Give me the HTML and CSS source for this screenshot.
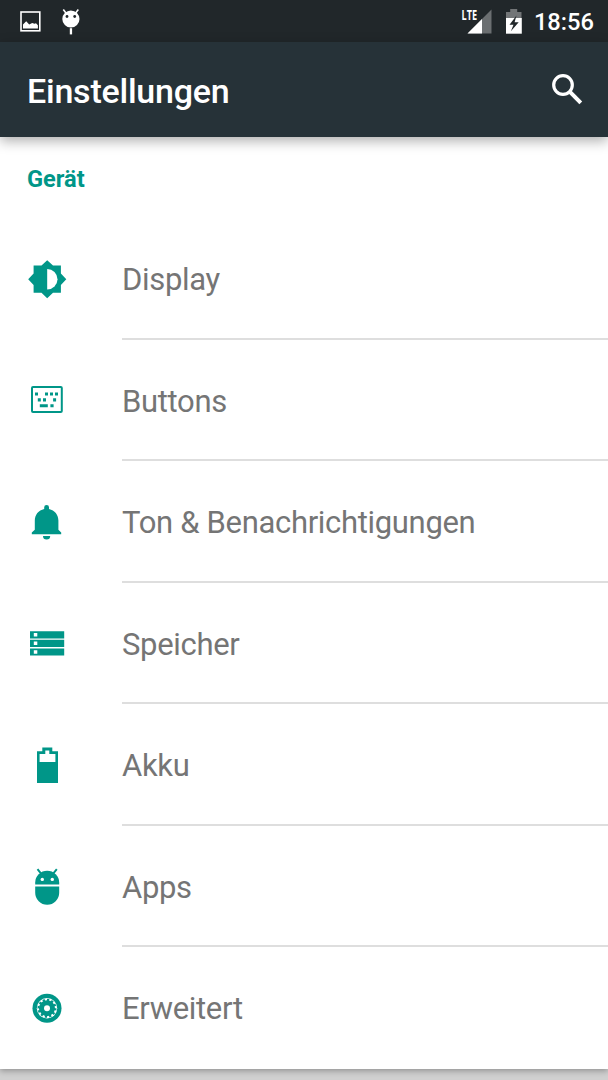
FILE: index.html
```
<!DOCTYPE html>
<html lang="de">
<head>
  <title>Einstellungen</title>
  <meta charset="utf-8">
  <link rel="stylesheet" href="styles.css">
</head>
<body>

  <!-- Status bar -->
  <div class="status-bar">
    <svg class="status-picture" width="22" height="22" viewBox="0 0 22 22">
      <rect x="1" y="1" width="18.8" height="18.8" fill="none" stroke="#fff" stroke-width="1.6"/>
      <path d="M3 17.5V13.5l3.2-3.2 3 3.2 3-1.5 2.3.8 1.500-.5 1.900 2v3.200z" fill="#fff"/>
    </svg>
    <svg class="status-droid" width="20" height="28" viewBox="0 0 20 28">
      <path d="M2.3 1.5l3 4M17.3 1.5l-3 4" stroke="#fff" stroke-width="1.6"/>
      <circle cx="9.9" cy="11" r="8.6" fill="#fff"/>
      <circle cx="6" cy="8.5" r="1.4" fill="#21272a"/>
      <circle cx="13.7" cy="8.5" r="1.4" fill="#21272a"/>
      <rect x="8.8" y="20.2" width="2.3" height="6.2" fill="#fff"/>
    </svg>
    <svg class="status-signal" width="32" height="28" viewBox="0 0 32 28">
      <path d="M30.5 1.5v24H6.5z" fill="#6b6f71"/>
      <path d="M21 11V25.5H6.5z" fill="#fff"/>
      <text x="0.5" y="12" class="lte" textLength="15.5" lengthAdjust="spacingAndGlyphs">LTE</text>
    </svg>
    <svg class="status-battery" width="18" height="28" viewBox="0 0 18 28">
      <path d="M5.200 1h7v3h4.300v6.500H1V4h4.200z" fill="#727577"/>
      <path d="M1 10h15.800v15.700H1z" fill="#fff"/>
      <path d="M11.500 7.500l-7 9.200h4l-2.600 6.500 7.800-9H9.600z" fill="#21272a"/>
    </svg>
    <span class="clock">18:56</span>
  </div>

  <div class="toolbar">
    <h1>Einstellungen</h1>
    <svg width="32" height="32" viewBox="0 0 32 32">
      <circle cx="12" cy="11" r="9.3" fill="none" stroke="#fff" stroke-width="3.2"/>
      <path d="M18.7 17.7L29.8 28.8" stroke="#fff" stroke-width="4"/>
    </svg>
  </div>

  <div class="card">
    <h2>Gerät</h2>
    <ul class="settings">
      <li>
        <svg class="icon" viewBox="0 0 40 40">
          <path d="M20.2 1.3L26 6.6h7.9v7.9l5.4 5.7-5.4 5.7v7.9H26l-5.8 5.4-5.7-5.4H6.6v-7.9l-5.4-5.7 5.4-5.7V6.6h7.9z"/>
          <path class="cut" d="M20.2 9.9a10.3 10.3 0 0 1 0 20.6z"/>
        </svg>
        <span>Display</span>
      </li>
      <li>
        <svg class="icon" viewBox="0 0 40 40">
          <rect x="5" y="6.9" width="29.8" height="25.2" rx="1" class="outline"/>
          <path d="M8 12.6h3v3H8zM18 12.6h3v3h-3zM23 12.6h3v3h-3zM28 12.6h3v3h-3z"/>
          <path d="M10.8 18.3h3v3.2h-3zM16 18.3h3v3.2h-3zM26.1 18.3h3v3.2h-3z"/>
          <path d="M12.8 24.3h8v3h-8zM23.4 24.3h3.2v3h-3.2z"/>
        </svg>
        <span>Buttons</span>
      </li>
      <li>
        <svg class="icon" viewBox="0 0 40 40">
          <path d="M17.2 7V5.3a2.4 2.4 0 0 1 4.8 0V7c5.7 1.3 9.4 5.8 9.4 11.5v9.3l2.8 2.8v1.6H4.8v-1.6l3-2.8v-9.3C7.8 12.8 11.5 8.3 17.2 7z"/>
          <path d="M16 34h7.2a3.6 3.5 0 0 1-7.2 0z"/>
        </svg>
        <span>Ton &amp; Benachrichtigungen</span>
      </li>
      <li>
        <svg class="icon" viewBox="0 0 40 40">
          <path d="M3 8.2h34.2v7.2H3zM3 16.8h34.2v7.2H3zM3 25.4h34.2v7.2H3z"/>
          <path class="cut" d="M6.8 10h3.5v3.5H6.8zM6.8 18.6h3.5v3.5H6.8zM6.8 27.2h3.5v3.5H6.8z"/>
        </svg>
        <span>Speicher</span>
      </li>
      <li>
        <svg class="icon" viewBox="0 0 40 40">
          <path d="M15.3 2.5h10v3.8H31V37.9H10V6.3h5.3z"/>
          <path class="cut" d="M18.3 5.5h4v3.6h6.1v7.8H12.6V9.1h5.7z"/>
        </svg>
        <span>Akku</span>
      </li>
      <li>
        <svg class="icon" viewBox="0 0 40 40">
          <path class="outline" d="M10.5 3.2l3.8 4.6M29.8 3.2L26 7.8"/>
          <path d="M8.2 18.5v-2a12 11.7 0 0 1 24 0v2z"/>
          <path d="M8.2 20.6h24v6.2a12 12 0 0 1-24 0z"/>
          <circle class="cut" cx="15.3" cy="13.4" r="1.7"/>
          <circle class="cut" cx="25.3" cy="13.4" r="1.7"/>
        </svg>
        <span>Apps</span>
      </li>
      <li>
        <svg class="icon" viewBox="0 0 40 40">
          <circle cx="20" cy="20.2" r="14.5"/>
          <circle class="cut" cx="20" cy="20.2" r="10.2"/>
          <circle cx="20" cy="20.2" r="8"/>
          <circle class="teeth" cx="20" cy="20.2" r="8.3" pathLength="24"/>
          <circle class="cut" cx="20" cy="20.2" r="3"/>
        </svg>
        <span>Erweitert</span>
      </li>
    </ul>
  </div>

</body>
</html>
```

FILE: styles.css
```
/* General Page Styling */
* {
  box-sizing: border-box;
}

body {
  font-family: Roboto, sans-serif;
  background-color: #d0d0d0;
  margin: 0;
  height: 1080px;
  overflow: hidden;
}

/* Status Bar */
.status-bar {
  display: flex;
  align-items: center;
  height: 42px;
  padding: 2px 14px 0 20px;
  background-color: #21272a;
}

.status-droid {
  margin-left: 19px;
}

.status-signal {
  margin-left: auto;
  overflow: visible;
}

.status-battery {
  margin-left: 12px;
}

.lte {
  font-family: "Open Sans", sans-serif;
  font-size: 13.5px;
  font-weight: bold;
  fill: #fff;
}

.clock {
  margin-left: 11px;
  color: #fff;
  font-size: 23.7px;
  font-weight: 500;
}

/* Toolbar */
.toolbar {
  position: relative;
  display: flex;
  align-items: center;
  justify-content: space-between;
  height: 95px;
  padding: 0 25px 0 27px;
  background-color: #263238;
  box-shadow: 0 4px 12px rgba(0, 0, 0, 0.32);
}

h1 {
  margin: 2px 0 0;
  color: #fff;
  font-size: 34px;
  font-weight: 500;
  letter-spacing: -0.23px;
}

/* Settings List */
.card {
  height: 931.5px;
  background-color: #fff;
  box-shadow: 0 2px 6px rgba(0, 0, 0, 0.3);
}

h2 {
  height: 81px;
  margin: 0;
  padding: 28px 27px 0;
  color: #009688;
  font-size: 23.6px;
  font-weight: bold;
  line-height: 28px;
}

.settings {
  list-style-type: none;
  margin: 0;
  padding: 0;
}

li {
  display: flex;
  align-items: center;
  height: 121.5px;
  padding-left: 27px;
}

li span {
  flex: 1;
  height: 100%;
  margin-left: 55px;
  padding-top: 2px;
  border-bottom: 2px solid #dedede;
  color: #757575;
  font-size: 31px;
  letter-spacing: -0.32px;
  line-height: 120px;
}

li:last-child span {
  border-bottom: none;
}

/* Icons */
.icon {
  width: 40px;
  height: 40px;
  fill: #009688;
}

.cut {
  fill: #fff;
}

.outline {
  fill: none;
  stroke: #009688;
  stroke-width: 2;
}

.teeth {
  fill: none;
  stroke: #009688;
  stroke-width: 2.4;
  stroke-dasharray: 1 1;
}
```
